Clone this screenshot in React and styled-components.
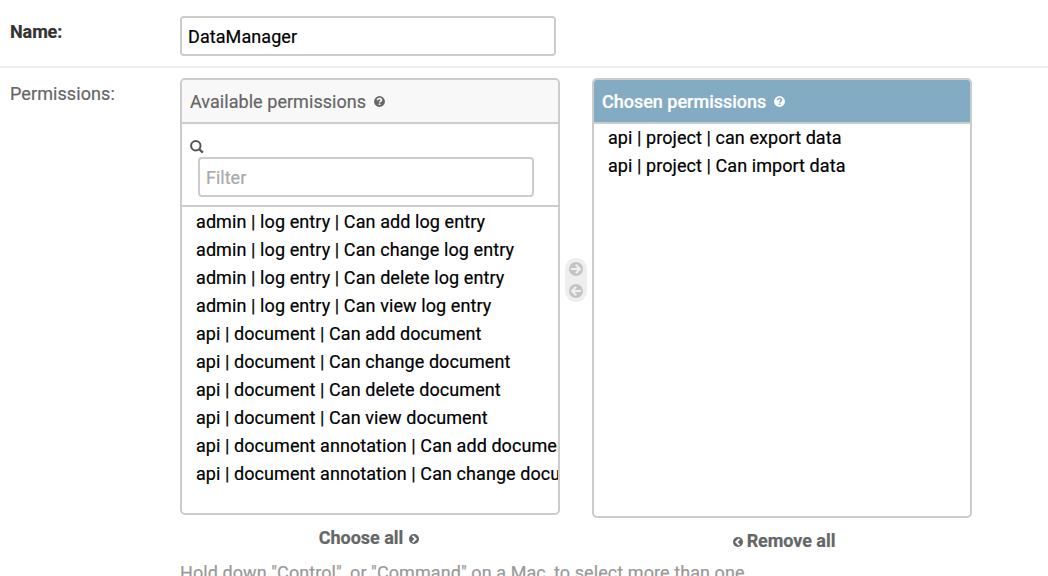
import React from "react";
import styled, { createGlobalStyle } from "styled-components";

const GlobalStyle = createGlobalStyle`
  * { box-sizing: border-box; }
  html, body { margin: 0; background: #fff; }
  body {
    height: 576px;
    overflow: hidden;
    font-family: Roboto, "Liberation Sans", sans-serif;
    font-size: 18px;
    line-height: 28px;
    color: #666;
    -webkit-text-stroke: 0.2px currentColor;
  }
`;

const Form = styled.form`
  height: 576px;
  overflow: hidden;
`;

const FormRow = styled.div`
  display: flex;
  align-items: flex-start;
  padding: ${(p) => p.$padding};
  border-bottom: 2px solid #eee;
`;

const Label = styled.label`
  flex: 0 0 170px;
  height: 28px;
  margin-top: ${(p) => p.$top}px;
  font-weight: ${(p) => (p.$required ? 700 : 400)};
  color: ${(p) => (p.$required ? "#333" : "#666")};
  letter-spacing: ${(p) => p.$spacing || 0}px;
`;

const TextInput = styled.input`
  display: block;
  width: ${(p) => p.$width}px;
  height: 40px;
  padding: 0 6px;
  border: 2px solid #ccc;
  border-radius: 4px;
  background: #fff;
  color: #000;
  font: 400 18px Roboto, sans-serif;
  letter-spacing: ${(p) => p.$spacing || 0}px;
  outline: none;
  &::placeholder { color: #a9a9a9; opacity: 1; }
`;

const Field = styled.div`
  flex: none;
`;

const Selector = styled.div`
  display: flex;
  align-items: flex-start;
`;

const Column = styled.div`
  width: 380px;
`;

const Panel = styled.section`
  height: ${(p) => p.$height}px;
  border: 2px solid #ccc;
  border-radius: 5px;
  overflow: hidden;
  background: #fff;
`;

const PanelTitle = styled.h2`
  display: flex;
  align-items: center;
  gap: 7.5px;
  height: 44px;
  margin: 0;
  padding: 1px 8px 0;
  border-bottom: 2px solid #ccc;
  background: ${(p) => (p.$chosen ? "#84abc4" : "#f8f8f8")};
  color: ${(p) => (p.$chosen ? "#fff" : "#666")};
  font-size: 18px;
  font-weight: ${(p) => (p.$chosen ? 500 : 400)};
  letter-spacing: ${(p) => p.$spacing || 0}px;
`;

const FilterBar = styled.div`
  height: 83px;
  padding: 16px 8px 0;
  border-bottom: 2px solid #ccc;
  svg { display: block; margin-bottom: 3px; }
  input { margin-left: 8px; }
`;

const Options = styled.ul`
  list-style: none;
  margin: 0;
  padding: ${(p) => p.$top}px 0 0 14px;
  color: #000;
  white-space: nowrap;
`;

const Option = styled.li`
  height: 28px;
  letter-spacing: ${(p) => p.$spacing || 0}px;
`;

const Chooser = styled.div`
  display: flex;
  flex-direction: column;
  align-items: center;
  justify-content: space-between;
  width: 22px;
  height: 44px;
  margin: 180px 5px 0;
  padding: 4px 0;
  border-radius: 11px;
  background: #eee;
`;

const BulkAction = styled.a`
  display: flex;
  align-items: center;
  justify-content: center;
  gap: ${(p) => p.$gap}px;
  height: 28px;
  margin-top: 9px;
  padding: ${(p) => p.$padding};
  font-weight: 700;
  letter-spacing: ${(p) => p.$spacing || 0}px;
  svg { margin-top: 2px; }
`;

const Help = styled.p`
  margin: 4px 0 0;
  color: #999;
  white-space: nowrap;
  letter-spacing: 0.08px;
`;

const QuestionIcon = ({ color, mark }) => (
  <svg width="11" height="11" viewBox="0 0 11 11">
    <circle cx="5.5" cy="5.5" r="5.4" fill={color} />
    <path d="M3.5 4.3C3.5 1.9 7.5 1.9 7.5 4.1C7.5 5.4 5.6 5.2 5.6 6.6M5.6 7.4V9" fill="none" stroke={mark} strokeWidth="1.7" />
  </svg>
);

const SearchIcon = () => (
  <svg width="14" height="14" viewBox="0 0 14 14" fill="none" stroke="#555">
    <circle cx="5.8" cy="5.8" r="4.7" strokeWidth="2" />
    <path d="M9 9L12.9 12.7" strokeWidth="2.3" />
  </svg>
);

const ArrowIcon = ({ left }) => (
  <svg width="14" height="14" viewBox="0 0 14 14">
    <circle cx="7" cy="7" r="7" fill="#c4c4c4" />
    <path
      d={left ? "M12 7H3.5M7.2 2.8L3 7L7.2 11.2" : "M2 7H10.5M6.8 2.8L11 7L6.8 11.2"}
      fill="none"
      stroke="#f0f0f0"
      strokeWidth="2.1"
    />
  </svg>
);

const ChevronIcon = ({ left }) => (
  <svg width="10" height="10" viewBox="0 0 10 10">
    <circle cx="5" cy="5" r="5" fill="#666" />
    <path d={left ? "M6.4 1.9L3.3 5L6.4 8.1" : "M3.6 1.9L6.7 5L3.6 8.1"} fill="none" stroke="#fff" strokeWidth="1.9" />
  </svg>
);

const available = [
  "admin | log entry | Can add log entry",
  "admin | log entry | Can change log entry",
  "admin | log entry | Can delete log entry",
  "admin | log entry | Can view log entry",
  "api | document | Can add document",
  "api | document | Can change document",
  "api | document | Can delete document",
  "api | document | Can view document",
  "api | document annotation | Can add document annotation",
  "api | document annotation | Can change document annotation",
];

const chosen = ["api | project | can export data", "api | project | Can import data"];

export default function App() {
  return (
    <>
      <GlobalStyle />
      <Form>
        <FormRow $padding="16px 10px 10px">
          <Label $required $top={2} $spacing={-0.1}>Name:</Label>
          <TextInput $width={376} $spacing={0.08} defaultValue="DataManager" />
        </FormRow>
        <FormRow $padding="10px 10px">
          <Label $top={2} $spacing={0.08}>Permissions:</Label>
          <Field>
            <Selector>
              <Column>
                <Panel $height={437}>
                  <PanelTitle $spacing={0.05}>
                    <span>Available permissions</span>
                    <QuestionIcon color="#666" mark="#f8f8f8" />
                  </PanelTitle>
                  <FilterBar>
                    <SearchIcon />
                    <TextInput $width={336} placeholder="Filter" />
                  </FilterBar>
                  <Options $top={1}>
                    {available.map((name) => (
                      <Option key={name} $spacing={name.startsWith("admin") ? 0.09 : 0.07}>{name}</Option>
                    ))}
                  </Options>
                </Panel>
                <BulkAction $gap={6} $padding="0 2px 0 0" $spacing={-0.05}>
                  <span>Choose all</span>
                  <ChevronIcon />
                </BulkAction>
              </Column>
              <Chooser>
                <ArrowIcon />
                <ArrowIcon left />
              </Chooser>
              <Column>
                <Panel $height={440}>
                  <PanelTitle $chosen>
                    <span>Chosen permissions</span>
                    <QuestionIcon color="#fff" mark="#84abc4" />
                  </PanelTitle>
                  <Options $top={0}>
                    {chosen.map((name) => <Option key={name} $spacing={0.07}>{name}</Option>)}
                  </Options>
                </Panel>
                <BulkAction $gap={4} $padding="0 0 0 4px" $spacing={-0.05}>
                  <ChevronIcon left />
                  <span>Remove all</span>
                </BulkAction>
              </Column>
            </Selector>
            <Help>Hold down "Control", or "Command" on a Mac, to select more than one.</Help>
          </Field>
        </FormRow>
      </Form>
    </>
  );
}
